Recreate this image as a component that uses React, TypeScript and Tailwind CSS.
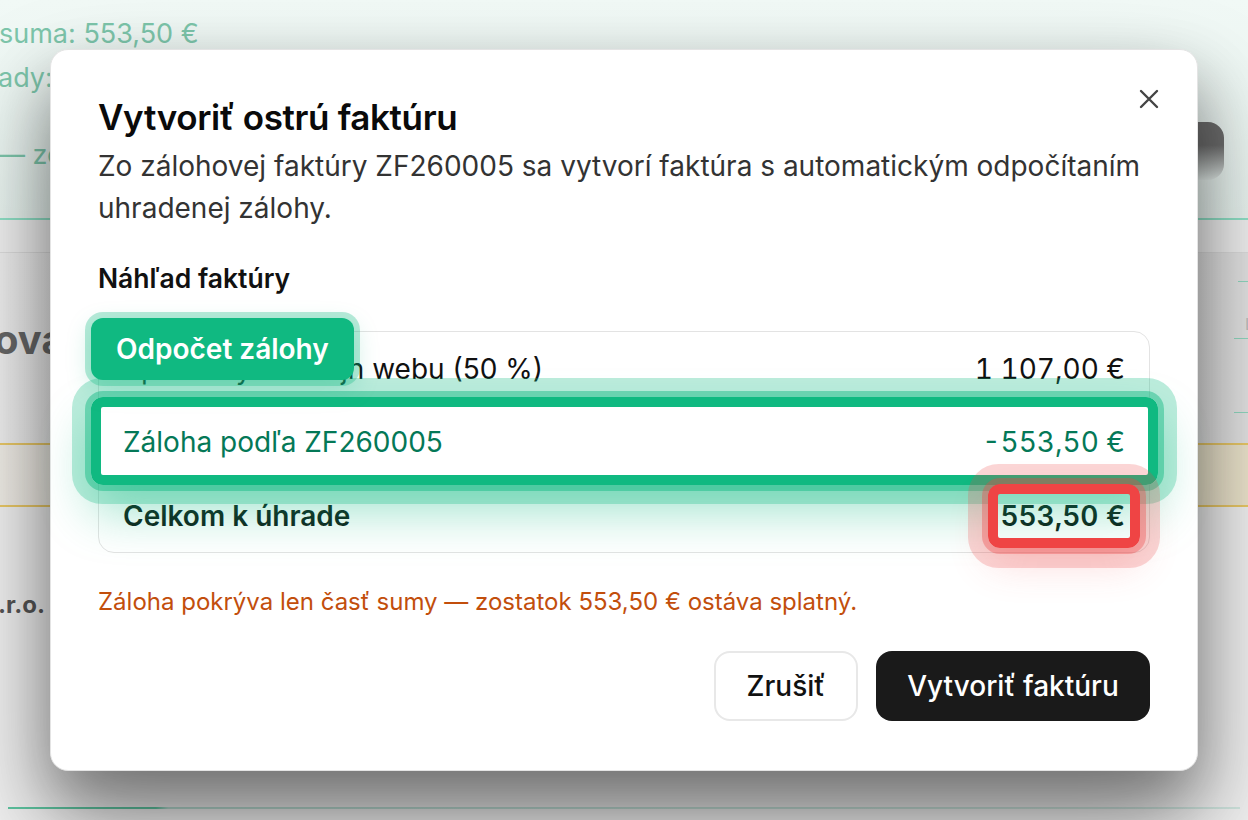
export default function App() {
  return (
    <div
      className="relative w-[1248px] h-[820px] overflow-hidden bg-[#efefef]"
      style={{ fontFamily: "Inter, 'Noto Sans', sans-serif" }}
    >
      {/* blurred page behind the dialog */}
      <div className="h-[820px] flex flex-col">
        <div className="h-[220px] flex bg-gradient-to-b from-[#f1f9f6] to-[#e8f3ef] border-b-2 border-[#8fe0c6]">
          <div className="flex-1 text-[27px] leading-[32px] text-[#7dc6ab]">
            <p className="pt-[18px] -ml-[1px]">suma: 553,50 €</p>
            <p className="mt-[12px] -ml-[2px]">ady:</p>
            <p className="mt-[45px] -ml-[2px]">— zo</p>
          </div>
          <div className="w-[98px] pt-[122px]">
            <div className="w-[74px] h-[58px] rounded-[16px] bg-gradient-to-b from-[#6d6d6d] from-[40%] to-[#e6efec]" />
          </div>
        </div>
        <div className="h-[33px] border-b border-[#dcdcdc] bg-[#efefef]" />
        <div className="h-[190px] flex bg-gradient-to-r from-[#ececec] to-[#e2e2e2]">
          <p className="flex-1 mt-[63px] text-[40px] leading-[48px] font-bold text-[#666] -ml-[6px]">
            ová
          </p>
          <div className="w-[14px] flex flex-col items-end">
            <div className="mt-[28px] w-[10px] h-[1px] bg-[#8fd6be]" />
            <p className="mt-[30px] text-[16px] text-[#bbb] -mr-[6px]">L</p>
            <div className="mt-[2px] w-[14px] h-[1px] bg-[#8fd6be]" />
            <div className="mt-[73px] w-[14px] h-[1px] bg-[#8fd6be]" />
          </div>
        </div>
        <div className="h-[64px] border-y-2 border-[#e8c766] bg-gradient-to-r from-[#eeebe5] to-[#ebe3cb]" />
        <p className="mt-[82px] text-[24px] leading-[32px] font-bold text-[#555] -ml-[2px]">
          .r.o.
        </p>
        <div className="mt-[186px] ml-[8px] w-[1232px] h-[2px] bg-[linear-gradient(to_right,#5ec4a0_0%,#5ec4a0_12%,rgba(110,190,168,0.45)_13%,rgba(130,200,180,0.3)_100%)]" />
      </div>

      {/* dialog */}
      <div className="absolute left-[50px] top-[49px] w-[1148px] rounded-[18px] bg-white border border-[#e4e4e4] shadow-[0_30px_60px_rgba(0,0,0,0.3),0_50px_100px_rgba(0,0,0,0.35)] px-[47px] pt-[47px] pb-[49px]">
        <button className="absolute right-[38px] top-[39px] w-[20px] h-[20px] text-[#444]">
          <svg width="20" height="20" viewBox="0 0 20 20" fill="none" stroke="currentColor" strokeWidth="2.4" strokeLinecap="round">
            <path d="M2 2 18 18M18 2 2 18" />
          </svg>
        </button>

        <h2 className="text-[35px] leading-[40px] font-semibold tracking-[-0.01em] text-[#0a0a0a]">
          Vytvoriť ostrú faktúru
        </h2>
        <p className="mt-2 text-[28px] leading-[42px] text-[#333]">
          Zo zálohovej faktúry ZF260005 sa vytvorí faktúra s automatickým odpočítaním uhradenej zálohy.
        </p>

        <h3 className="mt-[33px] text-[26.5px] leading-[32px] font-semibold text-[#111]">
          Náhľad faktúry
        </h3>

        <div className="relative mt-[37px]">
          <div className="absolute -left-[7px] -top-[13px] z-20 h-[62px] px-[25px] flex items-center rounded-[12px] bg-[#10b981] text-white text-[28px] font-semibold shadow-[0_0_0_6px_rgba(16,185,129,0.3),0_8px_24px_rgba(16,185,129,0.25)]">
            Odpočet zálohy
          </div>

          <div className="rounded-[16px] border border-[#e3e3e3] text-[28px] leading-[34px]">
            <div className="h-[73px] px-6 flex items-center justify-between text-[#111]">
              <span>Špeciálny redizajn webu (50 %)</span>
              <span className="tabular-nums">1 107,00 €</span>
            </div>
            <div className="relative h-[74px] px-6 flex items-center justify-between text-[#047857]">
              <span>Záloha podľa ZF260005</span>
              <span className="tabular-nums">-553,50 €</span>
              <div className="absolute -top-[8px] -bottom-[6px] -left-[8px] -right-[9px] z-10 rounded-[12px] border-[10px] border-[#10b981] shadow-[0_0_0_6px_rgba(16,185,129,0.45),0_0_0_19px_rgba(16,185,129,0.28),0_26px_50px_rgba(16,185,129,0.4)]" />
            </div>
            <div className="h-[73px] px-6 flex items-center justify-between font-semibold text-[#0f1f19]">
              <span>Celkom k úhrade</span>
              <span className="relative tabular-nums">
                553,50 €
                <span className="absolute -top-[15px] -bottom-[15px] -left-[12px] -right-[15px] z-10 rounded-[12px] border-[10px] border-[#ef4444] shadow-[0_0_0_6px_rgba(239,68,68,0.35),0_0_0_20px_rgba(239,68,68,0.22),0_16px_40px_rgba(239,68,68,0.2)]" />
              </span>
            </div>
          </div>
        </div>

        <p className="mt-[35px] text-[24px] leading-[28px] text-[#c24e0c]">
          Záloha pokrýva len časť sumy — zostatok 553,50 € ostáva splatný.
        </p>

        <div className="mt-[35px] flex justify-end gap-[18px]">
          <button className="h-[70px] w-[144px] rounded-[16px] border-2 border-[#e8e8e8] bg-white text-[28px] font-medium text-[#111]">
            Zrušiť
          </button>
          <button className="h-[70px] w-[274px] rounded-[16px] bg-[#1a1a1a] text-[28px] font-medium text-white">
            Vytvoriť faktúru
          </button>
        </div>
      </div>
    </div>
  );
}
